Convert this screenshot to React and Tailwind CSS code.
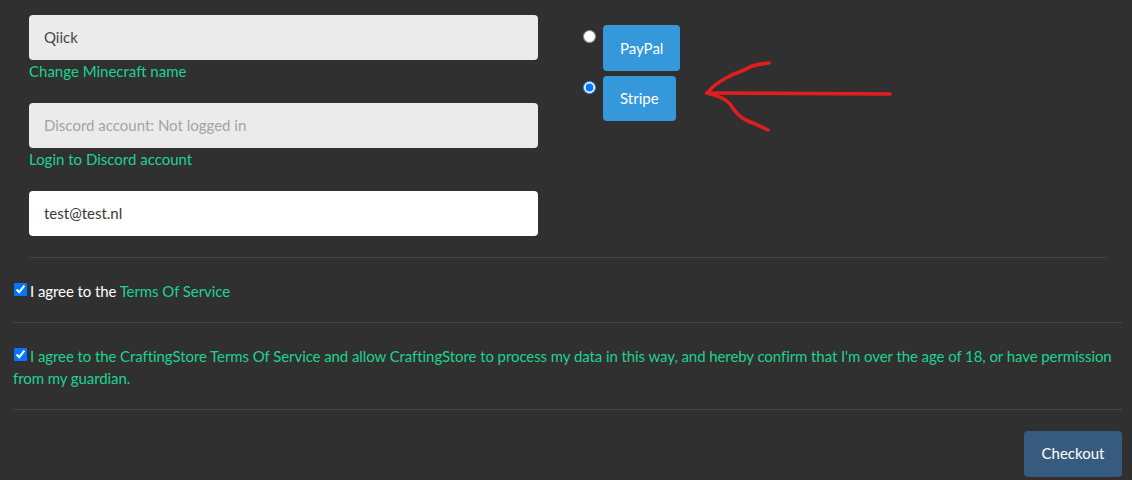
export default function App() {
  return (
    <div className="relative w-full h-[480px] overflow-hidden bg-[#303030] pl-[13px] pr-[10px] font-['Lato',sans-serif] text-[15px] leading-[22.5px] text-white">
      <div className="pl-[16px] pr-[15px] pt-[15px]">
        <div className="flex">
          <div className="w-[509px] flex flex-col">
            <div className="h-[45px] rounded-[4px] bg-[#ebebeb] px-[15px] flex items-center text-[#464646]">Qiick</div>
            <a className="text-[#1ed38f] mb-[20px]">Change Minecraft name</a>
            <div className="h-[45px] rounded-[4px] bg-[#ebebeb] px-[15px] flex items-center text-[#a3a3a3]">Discord account: Not logged in</div>
            <a className="text-[#1ed38f] mb-[21px]">Login to Discord account</a>
            <div className="h-[45px] rounded-[4px] bg-white px-[15px] flex items-center text-[#383838]">test@test.nl</div>
          </div>
          <div className="ml-[45px] pt-[10px] flex flex-col gap-[5px]">
            <div className="flex items-start gap-[7px]">
              <input type="radio" name="pay" readOnly className="m-0 mt-[5px] w-[13px] h-[13px]" />
              <button className="h-[46px] px-[17px] rounded-[4px] bg-[#3498db] text-white">PayPal</button>
            </div>
            <div className="flex items-start gap-[7px]">
              <input type="radio" name="pay" readOnly checked className="m-0 mt-[5px] w-[13px] h-[13px]" />
              <button className="h-[45px] px-[17px] rounded-[4px] bg-[#3498db] text-white">Stripe</button>
            </div>
          </div>
        </div>
        <div className="mt-[21px] border-t border-[#464646]" />
      </div>
      <div className="pt-[22px] pb-[19px] flex items-start tracking-[-0.08px]">
        <input type="checkbox" readOnly checked className="m-0 mt-[3px] ml-[1px] mr-[3px] w-[13px] h-[13px]" />
        <span>I agree to the <a className="text-[#1ed38f]">Terms Of Service</a></span>
      </div>
      <div className="border-t border-[#464646]" />
      <div className="pt-[22px] pb-[19px] text-[#1ed38f] tracking-[-0.08px]">
        <input type="checkbox" readOnly checked className="m-0 ml-[1px] mr-[3px] w-[13px] h-[13px] align-[1px]" />
        I agree to the CraftingStore Terms Of Service and allow CraftingStore to process my data in this way, and hereby confirm that I'm over the age of 18, or have permission from my guardian.
      </div>
      <div className="border-t border-[#464646]" />
      <div className="flex justify-end pt-[21px]">
        <button className="h-[46px] w-[98px] rounded-[4px] bg-[#375a7f] text-white">Checkout</button>
      </div>
      <svg className="absolute left-[700px] top-[55px] w-[200px] h-[85px]" viewBox="700 55 200 85" fill="none" stroke="#e01e1e" strokeWidth="3.5" strokeLinecap="round" strokeLinejoin="round">
        <path d="M707 93 L890 94" />
        <path d="M707 93 C712 87 720 81 728 77 C736 72 742 72 748 68 C755 64 762 64 769 63" />
        <path d="M707 93 C716 95 725 98 730 104 C735 112 740 118 748 121 C756 124 762 127 768 130" />
      </svg>
    </div>
  );
}
